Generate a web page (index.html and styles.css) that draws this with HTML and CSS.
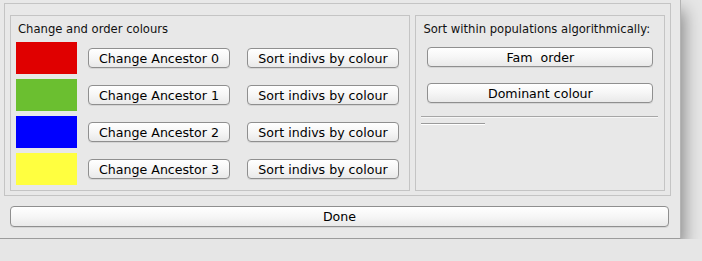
FILE: index.html
```html
<!DOCTYPE html>
<html lang="en">
<head>
  <meta charset="UTF-8">
  <title>Change and order colours</title>
  <link rel="stylesheet" href="styles.css">
</head>
<body>

  <!-- Dialog window -->
  <div class="window">
    <div class="frame">

      <!-- Colour list -->
      <div class="group group-left">
        <div class="group-title">Change and order colours</div>
        <div class="colour-row">
          <div class="swatch red"></div>
          <button class="btn btn-change">Change Ancestor 0</button>
          <button class="btn btn-sort">Sort indivs by colour</button>
        </div>
        <div class="colour-row">
          <div class="swatch green"></div>
          <button class="btn btn-change">Change Ancestor 1</button>
          <button class="btn btn-sort">Sort indivs by colour</button>
        </div>
        <div class="colour-row">
          <div class="swatch blue"></div>
          <button class="btn btn-change">Change Ancestor 2</button>
          <button class="btn btn-sort">Sort indivs by colour</button>
        </div>
        <div class="colour-row">
          <div class="swatch yellow"></div>
          <button class="btn btn-change">Change Ancestor 3</button>
          <button class="btn btn-sort">Sort indivs by colour</button>
        </div>
      </div>

      <!-- Algorithmic sorting -->
      <div class="group group-right">
        <div class="group-title">Sort within populations algorithmically:</div>
        <button class="btn btn-wide">Fam&nbsp; order</button>
        <button class="btn btn-wide">Dominant colour</button>
        <div class="separator"></div>
        <div class="progress"></div>
      </div>

    </div>

    <button class="btn btn-done">Done</button>
  </div>

</body>
</html>
```

FILE: styles.css
```css
body {
  margin: 0;
  background-color: #e6e6e6;
  font-family: "DejaVu Sans", Verdana, sans-serif;
  font-size: 11.6px;
  color: #111;
}

.window {
  width: 681px;
  height: 239px;
  background-color: #e8e8e8;
  border-right: 1px solid #b4b4b4;
  border-bottom: 1px solid #9c9c9c;
  box-shadow: 3px 10px 16px rgba(0, 0, 0, 0.42);
  padding-top: 3px;
  box-sizing: border-box;
}

.frame {
  display: flex;
  gap: 5px;
  margin-left: 4px;
  width: 667px;
  height: 193px;
  box-sizing: border-box;
  padding: 11px 5px 5px 5px;
  border: 1px solid #c4c4c4;
}

.group {
  box-sizing: border-box;
  border: 1px solid #c4c4c4;
  height: 176px;
}

.group-left {
  width: 401px;
  padding-left: 5px;
}

.group-right {
  width: 250px;
  padding-left: 11px;
}

.group-title {
  margin: 5px 0 5px 2px;
  height: 16px;
  line-height: 16px;
}

.group-right .group-title {
  margin-left: -4px;
  margin-bottom: 10px;
}

.colour-row {
  display: flex;
  align-items: center;
  height: 32px;
  margin-bottom: 5px;
}

.swatch {
  width: 61px;
  height: 32px;
}

.red { background-color: #e00000; }
.green { background-color: #6bbf30; }
.blue { background-color: #0000ff; }
.yellow { background-color: #ffff40; }

.btn {
  font-family: "DejaVu Sans", Verdana, sans-serif;
  font-size: 12.6px;
  color: #000;
  height: 20px;
  padding: 0;
  border: 1px solid #8f8f8f;
  border-radius: 4px;
  background: linear-gradient(#ffffff, #f6f6f6 50%, #e9e9e9);
  box-shadow: 0 1px 0 rgba(0, 0, 0, 0.08);
}

.btn-change {
  width: 142px;
  margin-left: 11px;
}

.btn-sort {
  width: 152px;
  margin-left: 17px;
}

.btn-wide {
  display: block;
  width: 226px;
  margin-bottom: 16px;
}

.separator {
  width: 237px;
  margin-left: -6px;
  margin-top: -3px;
  border-top: 1px solid #a6a6a6;
  border-bottom: 1px solid #f6f6f6;
}

.progress {
  width: 64px;
  margin-left: -6px;
  margin-top: 5px;
  border-top: 1px solid #9a9a9a;
  border-bottom: 1px solid #ffffff;
}

.btn-done {
  display: block;
  width: 659px;
  height: 21px;
  margin: 10px 0 0 10px;
}
```
